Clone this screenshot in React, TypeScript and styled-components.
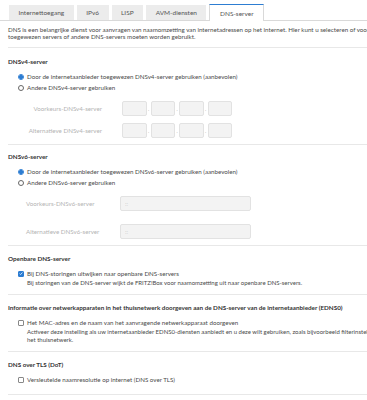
import React from "react";
import styled, { createGlobalStyle } from "styled-components";

const GlobalStyle = createGlobalStyle`
  html, body {
    margin: 0;
    padding: 0;
    background: #ffffff;
    overflow: hidden;
  }

  body {
    font-family: "Lato", "Liberation Sans", sans-serif;
    color: #4a4a4a;
  }
`;

const Blue = "#2d7dd2";

const tabs = ["Internettoegang", "IPv6", "LISP", "AVM-diensten", "DNS-server"];

export default function App() {
  return (
    <Page>
      <GlobalStyle />
      <TabBar>
        {tabs.map((t) => (
          <Tab key={t} $active={t === "DNS-server"}>
            {t}
          </Tab>
        ))}
      </TabBar>

      <Content>
        <Intro>
          DNS is een belangrijke dienst voor aanvragen van naamomzetting van
          internetadressen op het internet. Hier kunt u selecteren of voor de
          naamomzetting de door de internetaanbieder
          <br />
          toegewezen servers of andere DNS-servers moeten worden gebruikt.
        </Intro>

        <Section $top={10} $bottom={6}>
          <Heading>DNSv4-server</Heading>
          <Options>
            <Option>
              <Radio $checked />
              Door de internetaanbieder toegewezen DNSv4-server gebruiken
              (aanbevolen)
            </Option>
            <Option>
              <Radio />
              Andere DNSv4-server gebruiken
            </Option>
          </Options>
          <Fields $gap={7}>
            <V4Row label="Voorkeurs-DNSv4-server" />
            <V4Row label="Alternatieve DNSv4-server" />
          </Fields>
        </Section>

        <Section $top={8} $bottom={6}>
          <Heading>DNSv6-server</Heading>
          <Options>
            <Option>
              <Radio $checked />
              Door de internetaanbieder toegewezen DNSv6-server gebruiken
              (aanbevolen)
            </Option>
            <Option>
              <Radio />
              Andere DNSv6-server gebruiken
            </Option>
          </Options>
          <Fields $gap={13}>
            <FieldRow>
              <V6Label>Voorkeurs-DNSv6-server</V6Label>
              <V6Input disabled placeholder="::" />
            </FieldRow>
            <FieldRow>
              <V6Label>Alternatieve DNSv6-server</V6Label>
              <V6Input disabled placeholder="::" />
            </FieldRow>
          </Fields>
        </Section>

        <Section $top={9} $bottom={7}>
          <Heading>Openbare DNS-server</Heading>
          <Options>
            <Option>
              <Check $checked>
                <svg viewBox="0 0 10 10" width="5" height="5">
                  <path
                    d="M1.5 5.2 L4 7.6 L8.6 2.4"
                    fill="none"
                    stroke="#fff"
                    strokeWidth="1.8"
                  />
                </svg>
              </Check>
              Bij DNS-storingen uitwijken naar openbare DNS-servers
            </Option>
            <Hint>
              Bij storingen van de DNS-server wijkt de FRITZ!Box voor
              naamomzetting uit naar openbare DNS-servers.
            </Hint>
          </Options>
        </Section>

        <Section $top={9} $bottom={7}>
          <Heading>
            Informatie over netwerkapparaten in het thuisnetwerk doorgeven aan
            de DNS-server van de internetaanbieder (EDNS0)
          </Heading>
          <Options>
            <Option>
              <Check />
              Het MAC-adres en de naam van het aanvragende netwerkapparaat
              doorgeven
            </Option>
            <Hint>
              Activeer deze instelling als uw internetaanbieder EDNS0-diensten
              aanbiedt en u deze wilt gebruiken, zoals bijvoorbeeld
              filterinstellingen voor apparaten in
              <br />
              het thuisnetwerk.
            </Hint>
          </Options>
        </Section>

        <Section $top={9} $bottom={9}>
          <Heading>DNS over TLS (DoT)</Heading>
          <Options>
            <Option>
              <Check />
              Versleutelde naamresolutie op internet (DNS over TLS)
            </Option>
          </Options>
        </Section>
      </Content>
    </Page>
  );
}

const V4Row: React.FC<{ label: string }> = ({ label }) => (
  <FieldRow>
    <V4Label>{label}</V4Label>
    <Octets>
      {[0, 1, 2, 3].map((i) => (
        <React.Fragment key={i}>
          {i > 0 && <Dot>.</Dot>}
          <OctetInput disabled />
        </React.Fragment>
      ))}
    </Octets>
  </FieldRow>
);

const Page = styled.div`
  width: 460px;
`;

const TabBar = styled.div`
  display: flex;
  align-items: flex-end;
  gap: 3px;
  height: 20px;
  padding-left: 9px;
  border-bottom: 1px solid #d9d9d9;
`;

const Tab = styled.div<{ $active?: boolean }>`
  height: ${(p) => (p.$active ? "17px" : "15px")};
  padding: 0 9.5px;
  margin-bottom: ${(p) => (p.$active ? "-1px" : "0")};
  display: flex;
  align-items: center;
  justify-content: center;
  box-sizing: border-box;

  font-size: 6.5px;
  color: #555;
  background: ${(p) => (p.$active ? "#ffffff" : "#ececec")};
  border: ${(p) => (p.$active ? "1px solid #d9d9d9" : "none")};
  border-top: ${(p) => (p.$active ? `1.5px solid ${Blue}` : "none")};
  border-bottom: none;
`;

const Content = styled.div`
  padding-left: 8px;
`;

const Intro = styled.div`
  padding: 5px 0 7px;
  font-size: 6.2px;
  line-height: 7px;
  white-space: nowrap;
  border-bottom: 1px solid #e8e8e8;
`;

const Section = styled.section<{ $top: number; $bottom: number }>`
  padding: ${(p) => p.$top}px 0 ${(p) => p.$bottom}px;
  border-bottom: 1px solid #e8e8e8;
`;

const Heading = styled.div`
  font-size: 6.3px;
  line-height: 8px;
  font-weight: 700;
  color: #333;
  white-space: nowrap;
`;

const Options = styled.div`
  margin-top: 5px;
  padding-left: 10px;
  display: flex;
  flex-direction: column;
`;

const Option = styled.div`
  display: flex;
  align-items: center;
  gap: 3px;
  height: 11px;
  font-size: 6.2px;
  white-space: nowrap;
`;

const Radio = styled.span<{ $checked?: boolean }>`
  width: 6px;
  height: 6px;
  box-sizing: border-box;
  border-radius: 50%;
  border: 0.8px solid ${(p) => (p.$checked ? Blue : "#666")};
  background: ${(p) =>
    p.$checked
      ? `radial-gradient(circle, ${Blue} 0 1.6px, #cfe2f6 1.7px)`
      : "#fff"};
  flex-shrink: 0;
`;

const Check = styled.span<{ $checked?: boolean }>`
  width: 6px;
  height: 6px;
  box-sizing: border-box;
  border-radius: 1px;
  border: 0.8px solid ${(p) => (p.$checked ? Blue : "#888")};
  background: ${(p) => (p.$checked ? Blue : "#fff")};
  display: flex;
  align-items: center;
  justify-content: center;
  flex-shrink: 0;
`;

const Hint = styled.div`
  padding-left: 9px;
  font-size: 6px;
  line-height: 8px;
  white-space: nowrap;
`;

const Fields = styled.div<{ $gap: number }>`
  margin-top: 8px;
  display: flex;
  flex-direction: column;
  gap: ${(p) => p.$gap}px;
`;

const FieldRow = styled.div`
  display: flex;
  align-items: center;
`;

const V4Label = styled.div`
  width: 94px;
  text-align: right;
  margin-right: 20px;
  font-size: 6.2px;
  color: #b3b3b3;
  white-space: nowrap;
`;

const V6Label = styled.div`
  width: 94px;
  padding-left: 18px;
  font-size: 6.2px;
  color: #b3b3b3;
  white-space: nowrap;
`;

const Octets = styled.div`
  display: flex;
  align-items: center;
`;

const Dot = styled.span`
  width: 4px;
  text-align: center;
  font-size: 5px;
  color: #aaa;
`;

const inputBase = `
  box-sizing: border-box;
  height: 15px;
  background: #f3f3f3;
  border: 1px solid #e2e2e2;
  border-radius: 2px;
  outline: none;
  margin: 0;
  font-family: "Lato", "Liberation Sans", sans-serif;
  font-size: 6px;
  color: #bbb;
`;

const OctetInput = styled.input`
  ${inputBase}
  width: 24.5px;
  padding: 0;
`;

const V6Input = styled.input`
  ${inputBase}
  width: 131px;
  padding: 0 4px;

  &::placeholder {
    color: #ccc;
  }
`;
